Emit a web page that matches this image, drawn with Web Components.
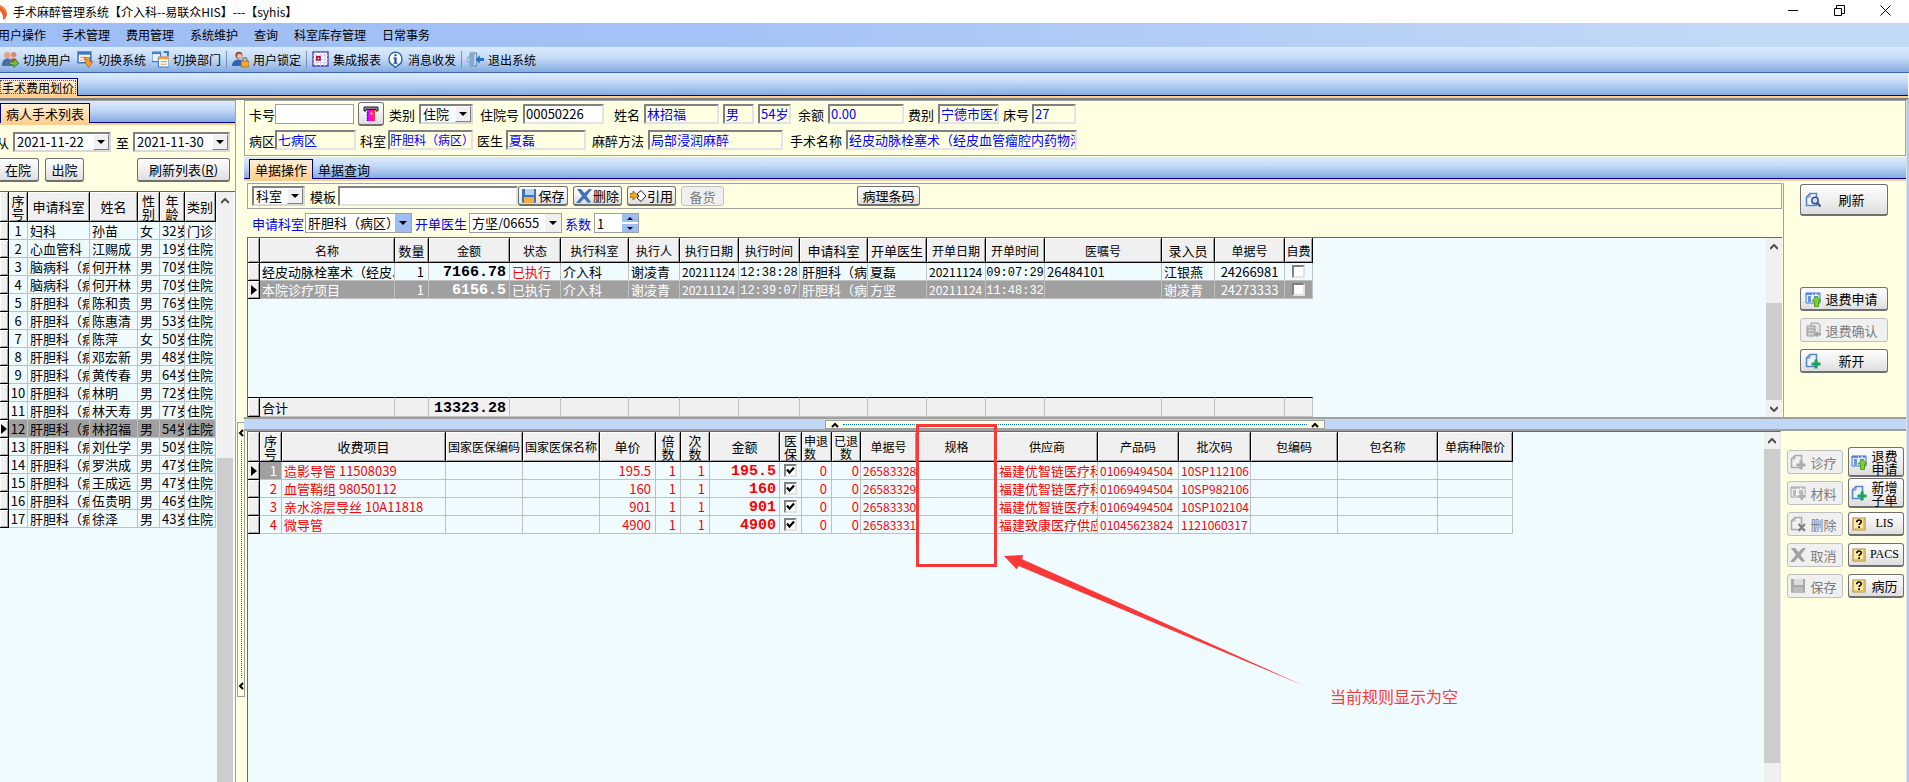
<!DOCTYPE html>
<html lang="zh-CN">
<head>
<meta charset="utf-8">
<meta name="viewport" content="width=device-width, initial-scale=1">
<title>手术麻醉管理系统</title>
<style>
html, body { margin: 0; height: 100%; }
body { font: 13px/17px "Noto Sans CJK SC", "Liberation Sans", sans-serif; color: #000; background: #ffffe1; overflow: hidden; }
</style>
</head>
<body>
<his-app></his-app>
<script>
const BASE = `*{box-sizing:border-box}:host([hidden]){display:none}`;
function define(name, css, render) {
  customElements.define(name, class extends HTMLElement {
    constructor() { super(); this.attachShadow({ mode: 'open' }); }
    connectedCallback() {
      const t = document.createElement('template');
      t.innerHTML = `<style>${BASE}${css}</style>` + render(this);
      this.shadowRoot.replaceChildren(t.content.cloneNode(true));
    }
  });
}
const at = (el, n, d = '') => el.getAttribute(n) ?? d;

/* ---------- icons ---------- */
const page = (c, f) => `<path d="M5 1.5h6.5v12h-10V5z" fill="${f}" stroke="${c}" stroke-width="1.6"/><path d="M5 1.5V5H1.5" fill="none" stroke="${c}"/>`;
const form = (c, f) => `<path d="M1 2h14v10H1z" fill="${f}" stroke="${c}"/><path d="M1 3h6M3 6h3M3 8h3M3 10h3M9 6h4M9 8h4M8 3h2M12 3h2" stroke="${c}" stroke-width="1.4"/>`;
const disk = (a, b, c) => `<path d="M1 1h14v13l-1 1H2l-1-1z" fill="${a}"/><path d="M4 1h9v6H4z" fill="${b}"/><path d="M3 9h10v6H3z" fill="${c}"/>`;
const cross = c => `<path d="M1 1h4l3.500 4L13 1h3l-5.500 7L15 14l-3 1-4-4.500L4 15H0l6-7z" fill="${c}"/>`;
const ICONS = {
  logo: `<path d="M-1 0c8-1 16 3 16 10 0 3-2 5-4 6 1-6-4-12-12-16z" fill="#e8622a"/><path d="M-1 2c7 3 11 8 11 14H2z" fill="#fff"/><path d="M-1 4c5 3 9 7 9 12H-1z" fill="#1b9c8c"/><path d="M6 1c4 1 8 4 9 8-2-3-5-6-9-8z" fill="#f7b35c"/>`,
  users: `<circle cx="5" cy="4" r="3" fill="#e9a27c"/><circle cx="11" cy="3.500" r="2.500" fill="#d98a62"/><path d="M0 14c0-5 2-7 5-7s5 2 5 7z" fill="#4b6cab"/><path d="M8 7h5l2 4-5 1z" fill="#c25037"/><path d="M7 10h4V7.500l5 4-5 4V13H7z" fill="#6fc04a" stroke="#2c7a25" stroke-width=".8"/>`,
  system: `<path d="M1 1h12v10H1z" fill="#fff" stroke="#3b78c8" stroke-width="1.500"/><path d="M1 1h12v2.500H1z" fill="#3b78c8"/><path d="M3 6h5M3 8.500h7" stroke="#f0a030"/><path d="M7 6h5v4h3l-4 5.500L7 10h2V8H7z" fill="#f6a030" stroke="#b05a10" stroke-width=".7"/>`,
  dept: `<path d="M0 1h8v9H0z" fill="#e8f1fd" stroke="#3b78c8"/><path d="M0 2h8M11 1h4v4" stroke="#3b78c8" stroke-width="1.800" fill="none"/><path d="M6 6h10v9H6z" fill="#fff" stroke="#3b78c8"/><path d="M6 6.500h10" stroke="#f0a030" stroke-width="2.500"/><path d="M8 10h6M8 12.500h6" stroke="#d9a05b"/>`,
  lock: `<circle cx="6.500" cy="4" r="3.300" fill="#8e4a3a"/><circle cx="7" cy="5" r="2.300" fill="#f0c0a0"/><path d="M0 14c0-4 3-6 6-6s6 2 6 6z" fill="#2c66b8"/><path d="M10 10V8.500a2 2 0 0 1 4 0V10" fill="none" stroke="#888" stroke-width="1.500"/><path d="M8.500 9.500H16V15H8.500z" fill="#f0a838" stroke="#a06010" stroke-width=".7"/>`,
  report: `<path d="M1 1h14v13H1z" fill="#fff" stroke="#5550b8" stroke-width="1.500"/><path d="M1 4h14M1 8h14M1 11h14M4 1v13M8 1v13M12 1v13" stroke="#cfccf5"/><path d="M4.500 5.500h3v3h-3z" fill="#fff" stroke="#b01030" stroke-width="1.500"/>`,
  info: `<path d="M8 1a6.500 6.500 0 0 1 2 12.500L8 16l-2-2.500A6.500 6.500 0 0 1 8 1z" fill="#fff" stroke="#1f5f9c" stroke-width="1.200"/><path d="M7 3h2v2H7zM6 6h3v5h1v1H6v-1h1V7H6z" fill="#1a3fb0"/>`,
  exit: `<path d="M3 2h6v12H3z" fill="#cfe0f2" stroke="#6a88b0"/><path d="M3 2l4-1v14l-4-1z" fill="#7fabda"/><circle cx="2.500" cy="8" r="2.500" fill="none" stroke="#8aa6c8"/><path d="M16 6.500h-4V4L8 8l4 4V9.500h4z" fill="#1d6fd0"/>`,
  card: `<path d="M1 1h14v4h-2V3.500H3V5H1z" fill="#888" stroke="#222"/><path d="M4 4h8v11H4z" fill="#f0f"/><path d="M9.500 4H12v11H9.500z" fill="#f33"/><path d="M4.500 6v9" stroke="#12c" stroke-width="1.500" stroke-dasharray="1.500 1"/><circle cx="8.500" cy="7.500" r="1.300" fill="#cd0"/>`,
  save: disk('#3d74b8', '#b9d4f2', '#f0b040'),
  saveOff: disk('#a9a9a9', '#dcdcdc', '#bcbcbc'),
  del: cross('#4272b8'), delOff: cross('#a0a0a0'),
  quote: `<path d="M0 5.500h3V3l5 4.500L3 12V9.500H0z" fill="#f5a818" stroke="#8a5a08" stroke-width=".8"/><path d="M7 6l4-3.500 5 5.500-5 5.500L7 10l2-2z" fill="#fff" stroke="#222"/>`,
  find: page('#5b86cf', '#eef4ff') + `<circle cx="10" cy="8.500" r="3.200" fill="#cfe0f6" stroke="#3d4f8a" stroke-width="1.500"/><path d="M12.500 11l3 3.500" stroke="#3d4f8a" stroke-width="2.200"/>`,
  refund: form('#3f74d8', '#e4eefc') + `<path d="M11.500 5l4.500 5h-2.500v5.500h-4V10H7z" fill="#7ed321" stroke="#3c8f10" stroke-width=".8"/>`,
  confirmOff: `<path d="M6 1h7l2 2v9H6z" fill="#e6e6e6" stroke="#9a9a9a"/><path d="M2 4h8v10H2z" fill="#d2d2d2" stroke="#9a9a9a"/><path d="M2 7h8M2 10h8" stroke="#9a9a9a"/><path d="M16 11h-3V9l-4 3.500 4 3V13.500h3z" fill="#a0a0a0"/>`,
  add: page('#5b86cf', '#eef4ff') + `<path d="M9.500 6.500h3v3h3v3h-3v3h-3v-3h-3v-3h3z" fill="#18a558"/>`,
  addOff: page('#ababab', '#f2f2f2') + `<path d="M9.500 6.500h3v3h3v3h-3v3h-3v-3h-3v-3h3z" fill="#ababab"/>`,
  formOff: form('#a8a8a8', '#f0f0f0') + `<path d="M10.500 7.500h2.500V10h2.500v2.500H13V15h-2.500v-2.500H8V10h2.500z" fill="#b0b0b0"/>`,
  removeOff: page('#ababab', '#f2f2f2') + `<path d="M8.500 8l6.500 7M15 8l-6.500 7" stroke="#7d7d7d" stroke-width="2"/>`,
  help: `<path d="M2 2h12v12H2z" fill="#ffeaa0" stroke="#b09040" stroke-width="1.200"/><path d="M3 13h10V3" fill="none" stroke="#d9b860" stroke-width="1.500"/><path d="M5.800 6.300c0-3 4.500-3 4.500-.5 0 1.700-2.200 1.800-2.200 3.200" fill="none" stroke="#111" stroke-width="1.700"/><path d="M7.200 10.200h1.800v1.800H7.200z" fill="#111"/>`
};
define('his-icon', `:host{display:inline-flex;flex:none;width:16px;height:16px}svg{width:100%;height:100%}`,
  el => `<svg viewBox="0 0 16 16" preserveAspectRatio="xMaxYMid slice" aria-hidden="true">${ICONS[at(el, 'name')]}</svg>`);

/* ---------- controls ---------- */
define('his-button', `
:host{display:block;flex:none}
button{width:100%;height:100%;display:flex;align-items:center;justify-content:center;gap:var(--gap,2px);padding:var(--pad,0 1px);font:inherit;line-height:13px;color:inherit;
 background:linear-gradient(#fdfdfd,#f0f0f0 50%,#dedede);border:1px solid #707070;border-bottom-width:2px;border-radius:3px;white-space:pre-line}
button:disabled{background:#f0f0f0;border:1px solid #bfbfbf;color:#7d7d7d}
span{flex:var(--grow,none)}`,
  el => `<button type="button" ${el.hasAttribute('off') ? 'disabled' : ''} ${el.title ? `aria-label="${el.title}"` : ''}>${at(el, 'icon') ? `<his-icon name="${at(el, 'icon')}"></his-icon>` : ''}${el.textContent ? '<span><slot></slot></span>' : ''}</button>`);

define('his-field', `
:host{display:flex;flex:none;align-items:center;height:20px}
label{width:var(--lw,27px);padding-right:var(--lp,4px);text-align:right;white-space:nowrap;flex:none}
:host([tone=link]) label{color:#00f}
input{width:var(--w);height:100%;font:inherit;line-height:15px;padding:0 0 1px 1px;margin:0;border:2px solid;border-color:#808080 #e3e3e3 #e3e3e3 #808080;background:transparent;color:#00f;border-radius:0;outline:0}
:host([edit]) input{background:#fff;color:#000}
:host([small]) input{font-size:12px;padding-left:0}
:host([flat]) input{border:1px solid #a0a0a0}`,
  el => `${at(el, 'label') ? `<label for="f">${at(el, 'label')}</label>` : ''}<input id="f" value="${at(el, 'value')}" ${el.title ? `aria-label="${el.title}"` : ''} ${el.hasAttribute('edit') ? '' : 'readonly'}>`);

define('his-select', `
:host{display:flex;flex:none;align-items:center;height:20px}
label{width:var(--lw,27px);padding-right:var(--lp,4px);text-align:right;white-space:nowrap;flex:none}
:host([tone=link]) label{color:#00f}
.box{display:grid;grid-template-columns:1fr 16px;width:var(--w);height:100%;border:2px solid;border-color:#808080 #d8d8d8 #d8d8d8 #808080;background:#fff}
:host([flat]) .box{border:1px solid #a0a0a0}
select{grid-area:1/1/2/3;appearance:none;font:inherit;line-height:15px;width:100%;height:100%;border:0;margin:0;padding:0 16px 1px 2px;background:transparent;color:#000;outline:0;border-radius:0}
i{grid-area:1/2;pointer-events:none;background:#f0f0f0;border:1px solid;border-color:#fff #808080 #808080 #fff;display:flex;align-items:center;justify-content:center}
:host([flat]) i{border:0}
:host([hot]) i{background:#9dbdf5}
svg{width:8px;height:4px}`,
  el => `${at(el, 'label') ? `<label for="s">${at(el, 'label')}</label>` : ''}<div class="box"><select id="s" ${el.title ? `aria-label="${el.title}"` : ''}><option>${at(el, 'value')}</option></select><i><svg viewBox="0 0 8 4"><path d="M0 0h8L4 4z"/></svg></i></div>`);

define('his-spin', `
:host{display:flex;flex:none;align-items:center;height:20px;color:#00f}
label{width:var(--lw)}
.box{display:flex;width:var(--w);height:100%;border:1px solid #a0a0a0;background:#fff}
input{flex:1;min-width:0;border:0;padding:0 0 0 2px;font:inherit;line-height:15px;background:none;outline:0}
.b{width:16px;display:grid;grid-template-rows:1fr 1fr;gap:2px}
button{border:0;padding:0;background:#9dbdf5;display:flex;align-items:center;justify-content:center}
svg{width:6px;height:3px}`,
  el => `<label for="n">${at(el, 'label')}</label><div class="box"><input id="n" value="${at(el, 'value')}"><div class="b"><button type="button" aria-label="增加"><svg viewBox="0 0 6 3"><path d="M0 3h6L3 0z"/></svg></button><button type="button" aria-label="减少"><svg viewBox="0 0 6 3"><path d="M0 0h6L3 3z"/></svg></button></div></div>`);

define('his-tabs', `
:host{display:block;flex:none;border-bottom:2px solid #ffcf90}
nav{display:flex;align-items:flex-end;height:100%;gap:5px;background:linear-gradient(#dcebfd,#c5dbf7 40%,#85abe2);border-bottom:1px solid #000080;padding-left:var(--inset,0)}
button{height:calc(100% - var(--drop,2px));margin:0 0 -1px;border:0;background:none;font:inherit;padding:0;white-space:nowrap}
button.on{background:linear-gradient(#fff0d6,#ffcf90);border:solid #000080;border-width:1px 1px 0;padding:0 var(--tp,4px)}
.dots{outline:1px dotted #555;outline-offset:-3px}`,
  el => `<nav role="tablist">${at(el, 'items').split(',').map((t, i) => `<button type="button" role="tab" class="${i ? '' : 'on'} ${!i && el.hasAttribute('focus-ring') ? 'dots' : ''}">${t}</button>`).join('')}</nav>`);

define('his-scroll', `
:host{display:flex;flex-direction:column;flex:none;width:16px;background:#f0f0f0}
i{height:17px;display:flex;align-items:center;justify-content:center;flex:none}
svg{width:8px;height:6px}path{fill:none;stroke:#505050;stroke-width:2}
b{flex:1;background:#cdcdcd;margin:var(--before) 0 var(--after,0)}`,
  el => `<i><svg viewBox="0 0 8 6"><path d="M0 5l4-4 4 4"/></svg></i><b></b>${el.hasAttribute('down') ? '<i><svg viewBox="0 0 8 6"><path d="M0 1l4 4 4-4"/></svg></i>' : ''}`);

define('his-splitter', `
:host{display:flex;flex:none;background:#ffffe1}
.h{display:flex;border:1px solid #a0a0a0;background:#ffffe1;align-items:center;justify-content:space-between}
:host([dir=v]) .h{flex-direction:column;width:8px;height:275px;margin:322px 0 0 1px;padding:6px 0}
:host([dir=h]){background:#c2d7f5;justify-content:center;align-items:flex-end;height:14px;border-top:2px solid #a0a0a0;border-bottom:2px solid #a0a0a0}
:host([dir=h]) .h{width:500px;height:9px;padding:0 5px}
.d{flex:1;margin:4px}
:host([dir=v]) .d{border-left:1px dotted #0078d7}
:host([dir=h]) .d{border-top:1px dotted #0078d7}
svg{width:8px;height:8px}path{fill:none;stroke:#000;stroke-width:2}`,
  el => { const a = `<svg viewBox="0 0 8 8"><path d="${at(el, 'dir') === 'v' ? 'M6 1L3 4l3 3' : 'M1 6l3-3 3 3'}"/></svg>`; return `<div class="h">${a}<span class="d"></span>${a}</div>`; });

/* ---------- data grids ---------- */
const dept = '肝胆科（病区）';
const patients = [['妇科','孙苗','女','32岁','门诊'],['心血管科','江赐成','男','19岁'],['脑病科（病区）','何开林','男','70岁'],['脑病科（病区）','何开林','男','70岁'],[dept,'陈和贵','男','76岁'],[dept,'陈惠清','男','53岁'],[dept,'陈萍','女','50岁'],[dept,'邓宏新','男','48岁'],[dept,'黄传春','男','64岁'],[dept,'林明','男','72岁'],[dept,'林天寿','男','77岁'],[dept,'林招福','男','54岁'],[dept,'刘仕学','男','50岁'],[dept,'罗洪成','男','47岁'],[dept,'王成远','男','47岁'],[dept,'伍贵明','男','46岁'],[dept,'徐泽','男','43岁']];
const item = (n, name, price, no, sup, code, batch) => [n, name, '', '', price, '1', '1', price, '@1', '0', '0', no, '', sup, code, batch, '', '', ''];
/* column: [title, width, cell class, header class] */
const GRIDS = {
  patients: {
    mark: 9, head: 30, current: 11, selected: 'dark',
    cols: [['序\n号',19,'c'],['申请科室',62],['姓名',48],['性\n别',22],['年\n龄',25],['类别',31]],
    rows: patients.map((r, i) => [String(i + 1), ...r.slice(0, 4), r[4] || '住院'])
  },
  orders: {
    mark: 12, head: 25, current: 1, selected: 'light',
    cols: [['名称',135,'','s'],['数量',34,'r'],['金额',81,'r big','s'],['状态',51,'','s'],['执行科室',68,'','s'],['执行人',51,'','s'],['执行日期',59,'d','s'],['执行时间',61,'t','s'],['申请科室',68],['开单医生',59],['开单日期',59,'d','s'],['开单时间',59,'t','s'],['医嘱号',117,'','s'],['录入员',53],['单据号',70,'c','s'],['自费',28,'c','s']],
    rows: [['经皮动脉栓塞术（经皮.','1','7166.78','!已执行','介入科','谢凌青','20211124','12:38:28','肝胆科（病','夏磊','20211124','09:07:29','26484101','江银燕','24266981','@0'],
           ['本院诊疗项目','1','6156.5','已执行','介入科','谢凌青','20211124','12:39:07','肝胆科（病','方坚','20211124','11:48:32','','谢凌青','24273333','@0']],
    foot: ['合计','','13323.28']
  },
  items: {
    mark: 12, head: 30, current: 0, red: true,
    cols: [['序\n号',22,'r'],['收费项目',164],['国家医保编码',77,'','s'],['国家医保名称',77,'','s'],['单价',56,'r'],['倍\n数',25,'r'],['次\n数',29,'r'],['金额',70,'r big'],['医\n保',22,'c'],['申退\n数',30,'r','s l'],['已退\n数',29,'r n','s'],['单据号',56,'d','s'],['规格',80,'','s'],['供应商',101,'','s'],['产品码',81,'d','s'],['批次码',72,'d','s'],['包编码',87,'','s'],['包名称',100,'','s'],['单病种限价',75,'','s']],
    rows: [item('1','造影导管 11508039','195.5','26583328','福建优智链医疗科技','01069494504','10SP112106'),
           item('2','血管鞘组 98050112','160','26583329','福建优智链医疗科技','01069494504','10SP982106'),
           item('3','亲水涂层导丝 10A11818','901','26583330','福建优智链医疗科技','01069494504','10SP102104'),
           item('4','微导管','4900','26583331','福建致康医疗供应','01045623824','1121060317')]
  }
};
define('his-grid', `
:host{display:flex;min-height:0;min-width:0;background:#f0fbff;border-top:1px solid #696969}
.area{flex:1;min-width:0;overflow:hidden;display:flex;flex-direction:column}
.fill{flex:1}
table{table-layout:fixed;border-collapse:separate;border-spacing:0;flex:none}
th,td{padding:0;overflow:hidden;white-space:pre;font-weight:400;border:solid #c0c0c0;border-width:0 1px 1px 0}
td{height:18px;line-height:17px;text-align:left;padding-left:2px}
th{background:#f0f0f0;border-color:#000;text-align:center;box-shadow:inset 1px 1px #fff,inset -1px -1px #a0a0a0}
thead th{line-height:13px}
th.s{font-size:12px}th.l{text-align:left;padding-left:2px}
td.r{text-align:right;padding-right:4px}
td.c{text-align:center;padding:0}
td.n{padding:0 1px 0 0}
td.d{font-size:12px}
td.t{font:12px/14px "Liberation Mono",monospace;padding:3px 0 0;text-align:center}
td.big{font:bold 15px/14px "Liberation Mono",monospace;padding:3px 3px 0 0}
.red td,td.warn{color:#f00}
tr.dark td{background:#a0a0a0}
tr.light td{background:#a0a0a0;color:#fff}
td.cell{background:#a0a0a0;color:#fff}
.foot td{background:#f0f0f0;height:20px;border-top:1px solid #000;padding-left:2px}
.foot th{border-top:1px solid #000}
svg.m{width:6px;height:10px;display:block;margin:0 auto}
input{appearance:none;width:13px;height:13px;margin:1px auto;display:block;background:#fff;border:2px solid;border-color:#808080 #e3e3e3 #e3e3e3 #808080;border-radius:0}
.k{display:grid;place-items:center}.k>*{grid-area:1/1}.k svg{width:9px;height:9px;pointer-events:none}`,
  el => {
    const g = GRIDS[at(el, 'source')];
    const total = g.mark + g.cols.reduce((s, c) => s + c[1], 0);
    const open = cls => `<table class="${cls}" style="width:${total}px"><colgroup><col style="width:${g.mark}px">${g.cols.map(c => `<col style="width:${c[1]}px">`).join('')}</colgroup>`;
    const cell = (v, c, ri, ci) => {
      let k = c[2] || '', out = v;
      if (v[0] === '!') { k += ' warn'; out = v.slice(1); }
      if (v[0] === '@') out = `<div class="k"><input type="checkbox" aria-label="${c[0].replace('\n', '')}" ${v === '@1' ? 'checked' : ''}>${v === '@1' ? '<svg viewBox="0 0 9 9"><path d="M1 3.500l2.500 3L8 1.500" fill="none" stroke="#000" stroke-width="2.200"/></svg>' : ''}</div>`;
      if (g.red && ri === g.current && ci === 0) k += ' cell';
      return `<td class="${k}">${out}</td>`;
    };
    return `<div class="area">${open(g.red ? 'red' : '')}<thead><tr style="height:${g.head}px"><th></th>${g.cols.map(c => `<th class="${c[3] || ''}">${c[0]}</th>`).join('')}</tr></thead><tbody>${
      g.rows.map((r, ri) => `<tr class="${ri === g.current && g.selected || ''}"><th>${ri === g.current ? '<svg class="m" viewBox="0 0 6 10"><path d="M0 0l6 5-6 5z"/></svg>' : ''}</th>${r.map((v, ci) => cell(v, g.cols[ci], ri, ci)).join('')}</tr>`).join('')
    }</tbody></table><div class="fill"></div>${g.foot ? `${open('foot')}<tbody><tr><th></th>${g.cols.map((c, i) => `<td class="${i === 2 ? 'r big' : ''}">${g.foot[i] || ''}</td>`).join('')}</tr></tbody></table>` : ''}</div><slot></slot>`;
  });

/* ---------- frame ---------- */
define('his-titlebar', `
:host{display:flex;align-items:center;flex:none;height:23px;background:#fff;font-size:12px;gap:5px}
his-icon{width:8px}
h1{font:inherit;margin:0;flex:1}
.w{display:flex;gap:35px;padding:0 18px 3px 0}
button{border:0;background:none;padding:0;width:11px;height:11px;display:flex}
svg{width:11px;height:11px}path{fill:none;stroke:#000}`,
  () => `<his-icon name="logo"></his-icon><h1>手术麻醉管理系统【介入科--易联众HIS】---【syhis】</h1><div class="w">
<button type="button" aria-label="最小化"><svg viewBox="0 0 11 11"><path d="M0 5.500h10"/></svg></button><button type="button" aria-label="还原"><svg viewBox="0 0 11 11"><path d="M.5 3.500h7v7h-7zM2.500 3V.5h8v8H8"/></svg></button><button type="button" aria-label="关闭"><svg viewBox="0 0 11 11"><path d="M.5.5l10 10M10.500.5l-10 10"/></svg></button></div>`);

define('his-menubar', `
:host{display:flex;align-items:center;flex:none;height:24px;gap:16px;margin-left:-2px;padding-bottom:1px;background:linear-gradient(90deg,#9dbdf5,#a5c3f5 40%,#c2d8f7 90%);font-size:12px}
a{color:#000;text-decoration:none}`,
  () => ['用户操作', '手术管理', '费用管理', '系统维护', '查询', '科室库存管理', '日常事务'].map(t => `<a href="#">${t}</a>`).join(''));

define('his-toolbar', `
:host{display:flex;align-items:center;flex:none;height:26px;gap:6px;padding-left:2px;font-size:12px;background:linear-gradient(#dcebfd,#c5dbf7 45%,#85abe2);border-bottom:1px solid #3b64a8}
button{display:flex;align-items:center;gap:4px;border:0;padding:0;background:none;font:inherit;width:69px;white-space:nowrap}
his-icon{width:17px;height:17px}
hr{width:1px;height:18px;margin:0 -1px;border:0;background:#7d93b8}`,
  () => [['users', '切换用户'], ['system', '切换系统'], ['dept', '切换部门'], 0, ['lock', '用户锁定'], 0, ['report', '集成报表'], ['info', '消息收发'], 0, ['exit', '退出系统']]
    .map(b => b ? `<button type="button"><his-icon name="${b[0]}"></his-icon>${b[1]}</button>` : '<hr>').join(''));

define('his-patient-list', `
:host{display:flex;flex-direction:column;min-width:0;border-right:1px solid #a0a0a0;border-top:1px solid #a0a0a0}
his-tabs{height:24px}
.dates{display:flex;gap:3px;padding:7px 0 0;margin-left:-4px}
.acts{display:flex;gap:6px;padding:6px 5px 9px 0;margin-left:-3px}
.acts :nth-child(3){margin-left:auto}
his-button{height:24px}
his-grid{flex:1}
his-scroll{margin-right:2px}`,
  () => `<his-tabs items="病人手术列表" style="--tp:5px;--drop:1px"></his-tabs>
<div class="dates"><his-select label="从" value="2021-11-22" style="--lw:17px;--w:98px"></his-select><his-select label="至" value="2021-11-30" style="--lw:19px;--w:97px"></his-select></div>
<div class="acts"><his-button style="width:42px">在院</his-button><his-button style="width:39px">出院</his-button><his-button style="width:93px">刷新列表(<u>R</u>)</his-button></div>
<his-grid source="patients"><his-scroll style="--before:249px"></his-scroll></his-grid>`);

define('his-patient-info', `
:host{display:flex;flex-direction:column;flex:none;gap:2px;height:56px;padding:1px 3px;border:1px solid #a0a0a0;overflow:hidden}
div{display:flex;gap:4px;align-items:center;height:24px}
his-button{width:26px;height:24px}`,
  () => `<div><his-field label="卡号" flat edit style="--lp:0;--w:79px"></his-field><his-button icon="card" title="读卡"></his-button><his-select label="类别" value="住院" style="--lw:31px;--w:54px"></his-select>
<his-field label="住院号" value="00050226" edit style="--lw:46px;--w:81px"></his-field><his-field label="姓名" value="林招福" style="--lw:36px;--w:75px"></his-field><his-field title="性别" value="男" style="--w:31px"></his-field><his-field title="年龄" value="54岁" style="--w:33px"></his-field>
<his-field label="余额" value="0.00" style="--lw:33px;--w:76px"></his-field><his-field label="费别" value="宁德市医保" style="--lw:30px;--w:61px"></his-field><his-field label="床号" value="27" style="--lw:29px;--w:44px"></his-field></div>
<div><his-field label="病区" value="七病区" style="--lp:0;--w:81px"></his-field><his-field label="科室" value="肝胆科（病区）" small style="--lw:28px;--w:85px"></his-field><his-field label="医生" value="夏磊" style="--lw:29px;--w:80px"></his-field><his-field label="麻醉方法" value="局部浸润麻醉" style="--lw:58px;--w:135px"></his-field><his-field label="手术名称" value="经皮动脉栓塞术（经皮血管瘤腔内药物灌注" style="--lw:59px;--w:231px"></his-field></div>`);

define('his-orders', `
:host{display:grid;grid-template-columns:minmax(0,1fr) 122px;height:236px;flex:none;border-top:2px solid #fff}
.main{display:flex;flex-direction:column;min-width:0;padding:0 1px 0 3px;border-right:1px solid #a0a0a0}
.bar{display:flex;align-items:center;height:26px;flex:none;gap:5px;border:1px solid #a0a0a0;padding-left:4px}
.bar his-button{height:20px}
.bar .far{margin-left:128px}
.bar2{display:flex;align-items:center;height:28px;flex:none;gap:3px;padding-left:5px}
his-grid{flex:1;border-left:1px solid #696969}
his-button{--gap:1px}
.side{display:flex;flex-direction:column;padding:1px 0 0 16px}
.side his-button{width:88px;height:24px;margin-bottom:7px;--pad:0 6px 0 4px;--grow:1}
.side his-button:first-child{height:32px;margin-bottom:71px}`,
  () => `<div class="main"><div class="bar"><his-select title="范围" value="科室" style="--w:53px"></his-select><his-field label="模板" edit style="--lw:28px;--lp:2px;--w:180px;margin-right:-5px"></his-field><his-button icon="save" style="width:50px">保存</his-button><his-button icon="del" style="width:49px">删除</his-button><his-button icon="quote" style="width:49px">引用</his-button><his-button off style="width:43px">备货</his-button><his-button class="far" style="width:63px">病理条码</his-button></div>
<div class="bar2"><his-select label="申请科室" value="肝胆科（病区）" tone="link" flat hot style="--lw:53px;--lp:1px;--w:107px"></his-select><his-select label="开单医生" value="方坚/06655" tone="link" flat style="--lw:54px;--w:93px;--lp:2px"></his-select><his-spin label="系数" value="1" style="--lw:29px;--w:45px"></his-spin></div>
<his-grid source="orders"><his-scroll down style="--before:48px"></his-scroll></his-grid></div>
<div class="side"><his-button icon="find">刷新</his-button><his-button icon="refund">退费申请</his-button><his-button off icon="confirmOff">退费确认</his-button><his-button icon="add">新开</his-button></div>`);

define('his-items', `
:host{display:grid;grid-template-columns:minmax(0,1fr) 125px;flex:1;min-height:0}
his-grid{margin-left:3px;border-left:1px solid #696969;border-right:1px solid #e3e3e3}
.side{display:grid;grid-template-columns:56px 56px;grid-auto-rows:24px;gap:7px 5px;padding:19px 0 0 6px;align-content:start}
.side his-button{--gap:1px;height:24px;--pad:0 2px;--grow:1}
.side .tall{height:30px;margin-top:-3px}
his-button{text-align:center}
.latin{font:12px/13px "Liberation Serif",serif}`,
  () => `<his-grid source="items"><his-scroll style="--before:0px;--after:19px"></his-scroll></his-grid>
<div class="side"><his-button off icon="addOff">诊疗</his-button><his-button class="tall" icon="refund">退费<br>申请</his-button><his-button off icon="formOff">材料</his-button><his-button class="tall" icon="add">新增<br>子单</his-button><his-button off icon="removeOff">删除</his-button><his-button class="latin" icon="help">LIS</his-button><his-button off icon="delOff">取消</his-button><his-button class="latin" icon="help">PACS</his-button><his-button off icon="saveOff">保存</his-button><his-button icon="help">病历</his-button></div>`);

/* review note drawn over the work area */
define('his-note', `
:host{position:absolute;left:672px;top:324px;width:546px;height:286px;pointer-events:none;color:#fb3838}
.box{width:81px;height:143px;border:3px solid}
svg{position:absolute;left:88px;top:131px;width:300px;height:131px;fill:currentColor}
p{position:absolute;left:414px;top:260px;margin:0;font-size:16px;line-height:24px;white-space:nowrap}`,
  () => `<div class="box"></div><svg viewBox="0 0 300 131"><path d="M0 1L19 0 18.300 4.300 300 130.700 14.700 11 12.700 14.300z"/></svg><p><slot></slot></p>`);

define('his-app', `
:host{display:flex;flex-direction:column;min-height:100vh;height:100vh;overflow:hidden}
.top{height:25px;font-size:12px;--tp:3px;--drop:4px;margin:0 1px 0 -2px}
main{flex:1;min-height:0;display:grid;grid-template-columns:236px 8px minmax(0,1fr);border-top:2px solid #808080;border-right:2px solid #a9cbfa}
.work{position:relative;display:flex;flex-direction:column;min-width:0;border-right:1px solid #e3e3e3}
.work his-tabs{height:24px;margin-top:1px;--inset:5px;--tp:5px;--drop:1px}`,
  () => `<his-titlebar></his-titlebar><his-menubar></his-menubar><his-toolbar></his-toolbar><his-tabs class="top" items="手术费用划价" focus-ring></his-tabs>
<main><his-patient-list></his-patient-list><his-splitter dir="v"></his-splitter>
<section class="work"><his-patient-info></his-patient-info><his-tabs items="单据操作,单据查询"></his-tabs><his-orders></his-orders><his-splitter dir="h"></his-splitter><his-items></his-items><his-note>当前规则显示为空</his-note></section></main>`);
</script>
</body>
</html>
